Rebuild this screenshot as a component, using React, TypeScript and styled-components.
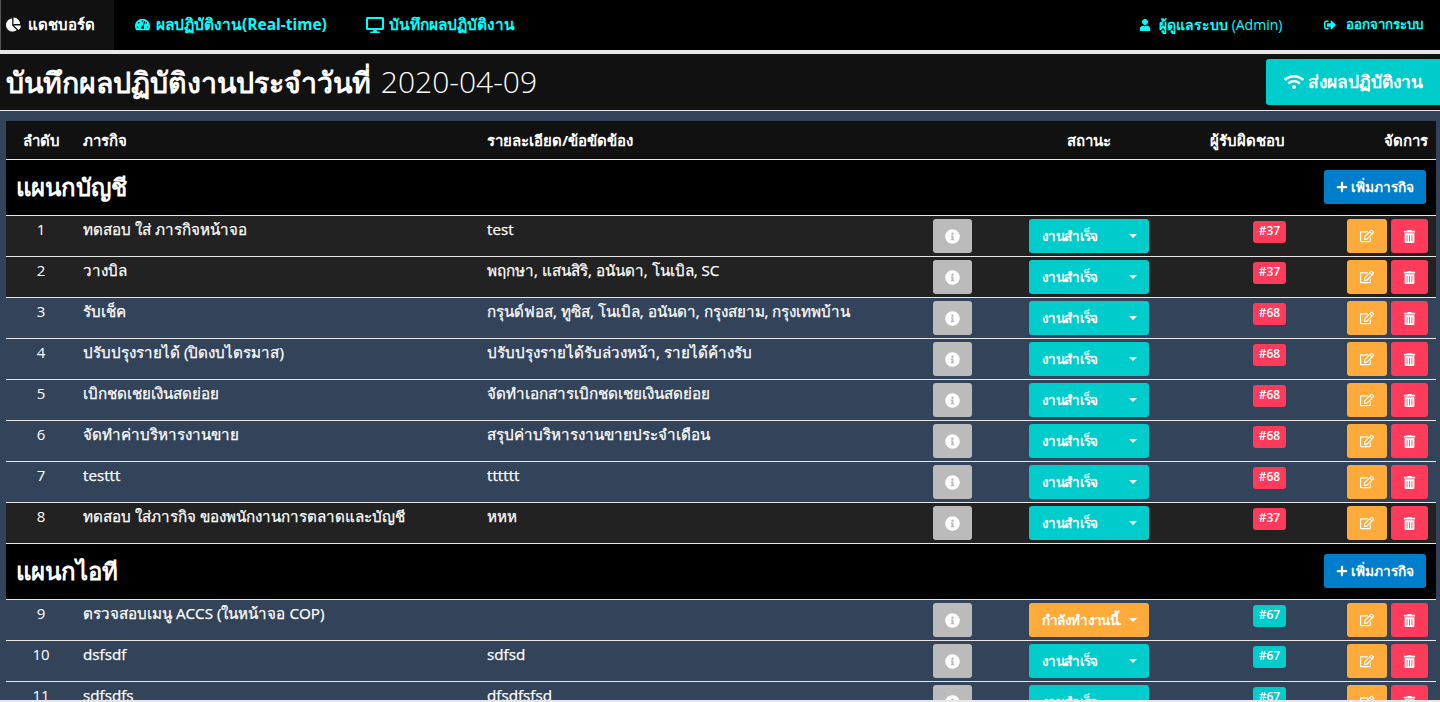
import React from "react";
import styled, { createGlobalStyle } from "styled-components";
import {
  FaChartPie,
  FaTachometerAlt,
  FaDesktop,
  FaUser,
  FaSignOutAlt,
  FaWifi,
  FaPlus,
  FaInfoCircle,
  FaRegEdit,
  FaTrashAlt,
} from "react-icons/fa";

const GlobalStyle = createGlobalStyle`
  html, body { margin: 0; padding: 0; height: 100%; overflow: hidden; background: #33445a; }
  body { font-family: "Open Sans", "Noto Sans", "Liberation Sans", sans-serif; font-size: 15px; color: #fff; }
  * { box-sizing: border-box; }
`;

const Page = styled.div`
  height: 702px;
  overflow: hidden;
  background: #33445a;
  border-bottom: 2px solid #e7e7e7;
`;

const Nav = styled.nav`
  display: flex;
  height: 54px;
  background: #000;
  border-bottom: 4px solid #e7e7e7;
  font-weight: 700;
`;

const NavGroup = styled.div`
  display: flex;
`;

const NavSpacer = styled.div`
  flex: 1;
`;

const NavItem = styled.a<{ $active?: boolean; $w: number; $pad: number; $gap: number; $fs: number }>`
  display: flex;
  align-items: center;
  gap: ${(p) => p.$gap}px;
  width: ${(p) => p.$w}px;
  padding-left: ${(p) => p.$pad}px;
  height: 50px;
  padding-bottom: 1px;
  font-size: ${(p) => p.$fs}px;
  color: ${(p) => (p.$active ? "#fff" : "#00ffff")};
  background: ${(p) => (p.$active ? "#111" : "transparent")};
  box-shadow: ${(p) => (p.$active ? "inset 1px 0 0 #555" : "none")};
  white-space: nowrap;
  svg { flex: none; }
`;

const Latin = styled.span`
  font-weight: 400;
`;

const TitleBar = styled.div`
  display: flex;
  justify-content: space-between;
  height: 57px;
  padding-top: 5px;
  background: #111;
  border-bottom: 1px solid #e7e7e7;
`;

const Title = styled.h1`
  margin: 0;
  padding-left: 6px;
  font-size: 30px;
  font-weight: 300;
  line-height: 46px;
  color: #fff;
  white-space: nowrap;
`;

const TitleThai = styled.b`
  margin-right: 2px;
  font-size: 28.5px;
  font-weight: 700;
`;

const SendButton = styled.button`
  display: flex;
  align-items: center;
  gap: 4px;
  width: 174px;
  height: 46px;
  padding: 0 0 0 18px;
  border: 0;
  border-radius: 3px 0 0 3px;
  background: #00cccc;
  color: #fff;
  font: 700 17.4px "Open Sans", sans-serif;
  white-space: nowrap;
`;

const Board = styled.section`
  margin: 10px 4px 0 6px;
`;

const cols = "70px 404px 446px 96px 134px 137px 143px";

const HeadRow = styled.div`
  display: grid;
  grid-template-columns: ${cols};
  align-items: center;
  height: 39px;
  padding-top: 1px;
  background: #111;
  border-bottom: 1px solid #e7e7e7;
  font-weight: 700;
  font-size: 15px;
`;

const HeadCell = styled.div<{ $align?: string; $pad?: string }>`
  text-align: ${(p) => p.$align || "left"};
  padding: ${(p) => p.$pad || "0 7px"};
  white-space: nowrap;
`;

const SectionRow = styled.div`
  display: flex;
  align-items: center;
  justify-content: space-between;
  height: 56px;
  padding: 0 10px 2px 10px;
  background: #000;
  border-bottom: 1px solid #e7e7e7;
`;

const SectionName = styled.h2`
  margin: 2px 0 0;
  font-size: 24px;
  font-weight: 700;
  color: #fff;
`;

const AddButton = styled.button`
  display: flex;
  align-items: center;
  justify-content: center;
  gap: 3px;
  width: 102px;
  height: 34px;
  padding: 0;
  border: 0;
  border-radius: 3px;
  background: #007ecc;
  color: #fff;
  font: 700 13.7px "Open Sans", sans-serif;
  white-space: nowrap;
`;

const Row = styled.div<{ $dark?: boolean }>`
  display: grid;
  grid-template-columns: ${cols};
  height: 41px;
  padding-top: 3px;
  background: ${(p) => (p.$dark ? "#222" : "#33445a")};
  border-bottom: 1px solid #e7e7e7;
  font-size: 15.2px;
  font-weight: 500;
`;

const Num = styled.div`
  text-align: center;
  font-weight: 400;
  font-size: 15px;
  line-height: 21px;
`;

const TextCell = styled.div`
  padding: 0 7px;
  line-height: 21px;
  white-space: nowrap;
  -webkit-text-stroke: 0.25px #fff;
`;

const IconCell = styled.div`
  padding-left: 7px;
`;

const InfoButton = styled.button`
  display: flex;
  align-items: center;
  justify-content: center;
  width: 39px;
  height: 34px;
  padding: 0;
  border: 0;
  border-radius: 3px;
  background: #bbb;
  color: #fff;
`;

const StatusButton = styled.button<{ $busy?: boolean }>`
  display: flex;
  align-items: center;
  justify-content: space-between;
  width: 120px;
  height: 34px;
  padding: 0 12px 0 13px;
  border: 0;
  border-radius: 3px;
  background: ${(p) => (p.$busy ? "#ffab3b" : "#00cccc")};
  color: #fff;
  font: 600 13.5px "Open Sans", sans-serif;
  letter-spacing: -0.6px;
  white-space: nowrap;
`;

const Caret = styled.span`
  width: 0;
  height: 0;
  border-left: 4px solid transparent;
  border-right: 4px solid transparent;
  border-top: 4px solid #fff;
`;

const OwnerCell = styled.div`
  display: flex;
  justify-content: flex-end;
  padding: 2px 7px 0 0;
`;

const Badge = styled.span<{ $red?: boolean }>`
  width: 33px;
  height: 22px;
  border-radius: 3px;
  background: ${(p) => (p.$red ? "#ff3b5c" : "#00cccc")};
  color: #fff;
  font-size: 12px;
  font-weight: 600;
  line-height: 20px;
  text-align: center;
`;

const ActionCell = styled.div`
  display: flex;
  justify-content: flex-end;
  gap: 4px;
  padding-right: 8px;
`;

const ActionButton = styled.button<{ $kind: "edit" | "del" }>`
  display: flex;
  align-items: center;
  justify-content: center;
  width: ${(p) => (p.$kind === "edit" ? 40 : 37)}px;
  height: 34px;
  padding: 0;
  border: 0;
  border-radius: 3px;
  background: ${(p) => (p.$kind === "edit" ? "#ffab3b" : "#ff3b5c")};
  color: #fff;
`;

type Task = { n: number; t: string; d: string; o: string; dark?: boolean; busy?: boolean; red?: boolean };

const groupA: Task[] = [
  { n: 1, t: "ทดสอบ ใส่ ภารกิจหน้าจอ", d: "test", o: "#37", dark: true, red: true },
  { n: 2, t: "วางบิล", d: "พฤกษา, แสนสิริ, อนันดา, โนเบิล, SC", o: "#37", dark: true, red: true },
  { n: 3, t: "รับเช็ค", d: "กรุนด์ฟอส, ทูซิส, โนเบิล, อนันดา, กรุงสยาม, กรุงเทพบ้าน", o: "#68", red: true },
  { n: 4, t: "ปรับปรุงรายได้ (ปิดงบไตรมาส)", d: "ปรับปรุงรายได้รับล่วงหน้า, รายได้ค้างรับ", o: "#68", red: true },
  { n: 5, t: "เบิกชดเชยเงินสดย่อย", d: "จัดทำเอกสารเบิกชดเชยเงินสดย่อย", o: "#68", red: true },
  { n: 6, t: "จัดทำค่าบริหารงานขาย", d: "สรุปค่าบริหารงานขายประจำเดือน", o: "#68", red: true },
  { n: 7, t: "testtt", d: "tttttt", o: "#68", red: true },
  { n: 8, t: "ทดสอบ ใส่ภารกิจ ของพนักงานการตลาดและบัญชี", d: "หหห", o: "#37", dark: true, red: true },
];

const groupB: Task[] = [
  { n: 9, t: "ตรวจสอบเมนู ACCS (ในหน้าจอ COP)", d: "", o: "#67", busy: true },
  { n: 10, t: "dsfsdf", d: "sdfsd", o: "#67" },
  { n: 11, t: "sdfsdfs", d: "dfsdfsfsd", o: "#67" },
];

function TaskRow({ task }: { task: Task }) {
  return (
    <Row $dark={task.dark}>
      <Num>{task.n}</Num>
      <TextCell>{task.t}</TextCell>
      <TextCell>{task.d}</TextCell>
      <IconCell>
        <InfoButton aria-label="info">
          <FaInfoCircle size={15} />
        </InfoButton>
      </IconCell>
      <IconCell>
        <StatusButton $busy={task.busy}>
          <span>{task.busy ? "กำลังทำงานนี้." : "งานสำเร็จ"}</span>
          <Caret />
        </StatusButton>
      </IconCell>
      <OwnerCell>
        <Badge $red={task.red}>{task.o}</Badge>
      </OwnerCell>
      <ActionCell>
        <ActionButton $kind="edit" aria-label="edit">
          <FaRegEdit size={14} />
        </ActionButton>
        <ActionButton $kind="del" aria-label="delete">
          <FaTrashAlt size={13} />
        </ActionButton>
      </ActionCell>
    </Row>
  );
}

function Section({ name, tasks }: { name: string; tasks: Task[] }) {
  return (
    <>
      <SectionRow>
        <SectionName>{name}</SectionName>
        <AddButton>
          <FaPlus size={12} />
          เพิ่มภารกิจ
        </AddButton>
      </SectionRow>
      {tasks.map((t) => (
        <TaskRow key={t.n} task={t} />
      ))}
    </>
  );
}

export default function App() {
  return (
    <Page>
      <GlobalStyle />
      <Nav>
        <NavGroup>
          <NavItem $active $w={114} $pad={6} $gap={7} $fs={15}>
            <FaChartPie size={15} />
            แดชบอร์ด
          </NavItem>
          <NavItem $w={232} $pad={21} $gap={6} $fs={15.5}>
            <FaTachometerAlt size={15} />
            ผลปฏิบัติงาน(Real-time)
          </NavItem>
          <NavItem $w={200} $pad={20} $gap={5} $fs={15.4}>
            <FaDesktop size={18} />
            บันทึกผลปฏิบัติงาน
          </NavItem>
        </NavGroup>
        <NavSpacer />
        <NavGroup>
          <NavItem $w={185} $pad={20} $gap={8} $fs={14}>
            <FaUser size={12} />
            <span>
              ผู้ดูแลระบบ <Latin>(Admin)</Latin>
            </span>
          </NavItem>
          <NavItem $w={136} $pad={20} $gap={10} $fs={13.3}>
            <FaSignOutAlt size={12} />
            ออกจากระบบ
          </NavItem>
        </NavGroup>
      </Nav>
      <TitleBar>
        <Title>
          <TitleThai>บันทึกผลปฏิบัติงานประจำวันที่</TitleThai> 2020-04-09
        </Title>
        <SendButton>
          <FaWifi size={20} />
          ส่งผลปฏิบัติงาน
        </SendButton>
      </TitleBar>
      <Board>
        <HeadRow>
          <HeadCell $align="center" $pad="0">ลำดับ</HeadCell>
          <HeadCell>ภารกิจ</HeadCell>
          <HeadCell>รายละเอียด/ข้อขัดข้อง</HeadCell>
          <HeadCell />
          <HeadCell $align="center">สถานะ</HeadCell>
          <HeadCell $align="right" $pad="0 8px 0 0">ผู้รับผิดชอบ</HeadCell>
          <HeadCell $align="right" $pad="0 8px 0 0">จัดการ</HeadCell>
        </HeadRow>
        <Section name="แผนกบัญชี" tasks={groupA} />
        <Section name="แผนกไอที" tasks={groupB} />
      </Board>
    </Page>
  );
}
